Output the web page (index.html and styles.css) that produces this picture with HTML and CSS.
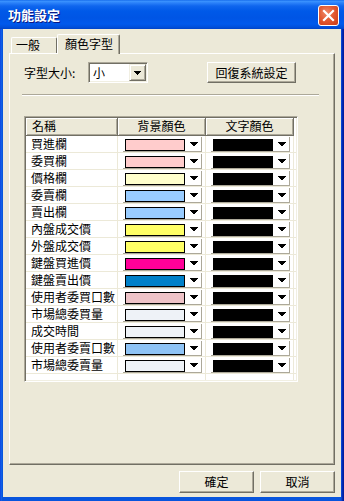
FILE: index.html
```html
<!DOCTYPE html>
<html lang="zh-Hant">
<head>
<meta charset="utf-8">
<title>功能設定</title>
<link rel="stylesheet" href="styles.css">
</head>
<body>
<div class="window">
  <div class="titlebar">
    <span class="title">功能設定</span>
    <div class="close">
      <svg width="13" height="13" viewBox="0 0 13 13"><path d="M2 2L11 11M11 2L2 11" stroke="#fff" stroke-width="2.2" stroke-linecap="square"/></svg>
    </div>
  </div>
  <div class="client">
    <div class="tabs">
      <div class="tab">一般</div>
      <div class="tab active">顏色字型</div>
    </div>
    <div class="panel">
      <div class="toprow">
        <span class="label">字型大小:</span>
        <div class="combo">
          <span class="combo-text">小</span>
          <div class="dropbtn"><svg class="tri" width="7" height="4" viewBox="0 0 7 4"><path d="M0 0h7v1h-1v1h-1v1h-1v1h-1v-1h-1v-1h-1v-1h-1z"/></svg></div>
        </div>
        <div class="btn reset">回復系統設定</div>
      </div>
      <div class="sep"></div>
      <div class="grid">
        <div class="hrow">
          <div class="hcell c1 left">名稱</div>
          <div class="hcell c2">背景顏色</div>
          <div class="hcell c3">文字顏色</div>
          <div class="hfill"></div>
        </div>
        <div class="row"><div class="cell c1">買進欄</div><div class="cell c2"><div class="cbox"><span class="sw" style="background:#FFCCCC"></span><svg class="tri" width="8" height="4" viewBox="0 0 8 4"><path d="M0 0h8v1h-1v1h-1v1h-1v1h-2v-1h-1v-1h-1v-1h-1z"/></svg></div></div><div class="cell c3"><div class="cbox"><span class="sw" style="background:#000"></span><svg class="tri" width="8" height="4" viewBox="0 0 8 4"><path d="M0 0h8v1h-1v1h-1v1h-1v1h-2v-1h-1v-1h-1v-1h-1z"/></svg></div></div><div class="cell fill"></div></div>
        <div class="row"><div class="cell c1">委買欄</div><div class="cell c2"><div class="cbox"><span class="sw" style="background:#FFCCCC"></span><svg class="tri" width="8" height="4" viewBox="0 0 8 4"><path d="M0 0h8v1h-1v1h-1v1h-1v1h-2v-1h-1v-1h-1v-1h-1z"/></svg></div></div><div class="cell c3"><div class="cbox"><span class="sw" style="background:#000"></span><svg class="tri" width="8" height="4" viewBox="0 0 8 4"><path d="M0 0h8v1h-1v1h-1v1h-1v1h-2v-1h-1v-1h-1v-1h-1z"/></svg></div></div><div class="cell fill"></div></div>
        <div class="row"><div class="cell c1">價格欄</div><div class="cell c2"><div class="cbox"><span class="sw" style="background:#FFFFCC"></span><svg class="tri" width="8" height="4" viewBox="0 0 8 4"><path d="M0 0h8v1h-1v1h-1v1h-1v1h-2v-1h-1v-1h-1v-1h-1z"/></svg></div></div><div class="cell c3"><div class="cbox"><span class="sw" style="background:#000"></span><svg class="tri" width="8" height="4" viewBox="0 0 8 4"><path d="M0 0h8v1h-1v1h-1v1h-1v1h-2v-1h-1v-1h-1v-1h-1z"/></svg></div></div><div class="cell fill"></div></div>
        <div class="row"><div class="cell c1">委賣欄</div><div class="cell c2"><div class="cbox"><span class="sw" style="background:#99CCFF"></span><svg class="tri" width="8" height="4" viewBox="0 0 8 4"><path d="M0 0h8v1h-1v1h-1v1h-1v1h-2v-1h-1v-1h-1v-1h-1z"/></svg></div></div><div class="cell c3"><div class="cbox"><span class="sw" style="background:#000"></span><svg class="tri" width="8" height="4" viewBox="0 0 8 4"><path d="M0 0h8v1h-1v1h-1v1h-1v1h-2v-1h-1v-1h-1v-1h-1z"/></svg></div></div><div class="cell fill"></div></div>
        <div class="row"><div class="cell c1">賣出欄</div><div class="cell c2"><div class="cbox"><span class="sw" style="background:#99CCFF"></span><svg class="tri" width="8" height="4" viewBox="0 0 8 4"><path d="M0 0h8v1h-1v1h-1v1h-1v1h-2v-1h-1v-1h-1v-1h-1z"/></svg></div></div><div class="cell c3"><div class="cbox"><span class="sw" style="background:#000"></span><svg class="tri" width="8" height="4" viewBox="0 0 8 4"><path d="M0 0h8v1h-1v1h-1v1h-1v1h-2v-1h-1v-1h-1v-1h-1z"/></svg></div></div><div class="cell fill"></div></div>
        <div class="row"><div class="cell c1">內盤成交價</div><div class="cell c2"><div class="cbox"><span class="sw" style="background:#FFFF66"></span><svg class="tri" width="8" height="4" viewBox="0 0 8 4"><path d="M0 0h8v1h-1v1h-1v1h-1v1h-2v-1h-1v-1h-1v-1h-1z"/></svg></div></div><div class="cell c3"><div class="cbox"><span class="sw" style="background:#000"></span><svg class="tri" width="8" height="4" viewBox="0 0 8 4"><path d="M0 0h8v1h-1v1h-1v1h-1v1h-2v-1h-1v-1h-1v-1h-1z"/></svg></div></div><div class="cell fill"></div></div>
        <div class="row"><div class="cell c1">外盤成交價</div><div class="cell c2"><div class="cbox"><span class="sw" style="background:#FFFF66"></span><svg class="tri" width="8" height="4" viewBox="0 0 8 4"><path d="M0 0h8v1h-1v1h-1v1h-1v1h-2v-1h-1v-1h-1v-1h-1z"/></svg></div></div><div class="cell c3"><div class="cbox"><span class="sw" style="background:#000"></span><svg class="tri" width="8" height="4" viewBox="0 0 8 4"><path d="M0 0h8v1h-1v1h-1v1h-1v1h-2v-1h-1v-1h-1v-1h-1z"/></svg></div></div><div class="cell fill"></div></div>
        <div class="row"><div class="cell c1">鍵盤買進價</div><div class="cell c2"><div class="cbox"><span class="sw" style="background:#FF0099"></span><svg class="tri" width="8" height="4" viewBox="0 0 8 4"><path d="M0 0h8v1h-1v1h-1v1h-1v1h-2v-1h-1v-1h-1v-1h-1z"/></svg></div></div><div class="cell c3"><div class="cbox"><span class="sw" style="background:#000"></span><svg class="tri" width="8" height="4" viewBox="0 0 8 4"><path d="M0 0h8v1h-1v1h-1v1h-1v1h-2v-1h-1v-1h-1v-1h-1z"/></svg></div></div><div class="cell fill"></div></div>
        <div class="row"><div class="cell c1">鍵盤賣出價</div><div class="cell c2"><div class="cbox"><span class="sw" style="background:#0080C8"></span><svg class="tri" width="8" height="4" viewBox="0 0 8 4"><path d="M0 0h8v1h-1v1h-1v1h-1v1h-2v-1h-1v-1h-1v-1h-1z"/></svg></div></div><div class="cell c3"><div class="cbox"><span class="sw" style="background:#000"></span><svg class="tri" width="8" height="4" viewBox="0 0 8 4"><path d="M0 0h8v1h-1v1h-1v1h-1v1h-2v-1h-1v-1h-1v-1h-1z"/></svg></div></div><div class="cell fill"></div></div>
        <div class="row"><div class="cell c1">使用者委買口數</div><div class="cell c2"><div class="cbox"><span class="sw" style="background:#EEC3C8"></span><svg class="tri" width="8" height="4" viewBox="0 0 8 4"><path d="M0 0h8v1h-1v1h-1v1h-1v1h-2v-1h-1v-1h-1v-1h-1z"/></svg></div></div><div class="cell c3"><div class="cbox"><span class="sw" style="background:#000"></span><svg class="tri" width="8" height="4" viewBox="0 0 8 4"><path d="M0 0h8v1h-1v1h-1v1h-1v1h-2v-1h-1v-1h-1v-1h-1z"/></svg></div></div><div class="cell fill"></div></div>
        <div class="row"><div class="cell c1">市場總委買量</div><div class="cell c2"><div class="cbox"><span class="sw" style="background:#EEF2F7"></span><svg class="tri" width="8" height="4" viewBox="0 0 8 4"><path d="M0 0h8v1h-1v1h-1v1h-1v1h-2v-1h-1v-1h-1v-1h-1z"/></svg></div></div><div class="cell c3"><div class="cbox"><span class="sw" style="background:#000"></span><svg class="tri" width="8" height="4" viewBox="0 0 8 4"><path d="M0 0h8v1h-1v1h-1v1h-1v1h-2v-1h-1v-1h-1v-1h-1z"/></svg></div></div><div class="cell fill"></div></div>
        <div class="row"><div class="cell c1">成交時間</div><div class="cell c2"><div class="cbox"><span class="sw" style="background:#EEF2F7"></span><svg class="tri" width="8" height="4" viewBox="0 0 8 4"><path d="M0 0h8v1h-1v1h-1v1h-1v1h-2v-1h-1v-1h-1v-1h-1z"/></svg></div></div><div class="cell c3"><div class="cbox"><span class="sw" style="background:#000"></span><svg class="tri" width="8" height="4" viewBox="0 0 8 4"><path d="M0 0h8v1h-1v1h-1v1h-1v1h-2v-1h-1v-1h-1v-1h-1z"/></svg></div></div><div class="cell fill"></div></div>
        <div class="row"><div class="cell c1">使用者委賣口數</div><div class="cell c2"><div class="cbox"><span class="sw" style="background:#8EC3F5"></span><svg class="tri" width="8" height="4" viewBox="0 0 8 4"><path d="M0 0h8v1h-1v1h-1v1h-1v1h-2v-1h-1v-1h-1v-1h-1z"/></svg></div></div><div class="cell c3"><div class="cbox"><span class="sw" style="background:#000"></span><svg class="tri" width="8" height="4" viewBox="0 0 8 4"><path d="M0 0h8v1h-1v1h-1v1h-1v1h-2v-1h-1v-1h-1v-1h-1z"/></svg></div></div><div class="cell fill"></div></div>
        <div class="row"><div class="cell c1">市場總委賣量</div><div class="cell c2"><div class="cbox"><span class="sw" style="background:#EEF2F7"></span><svg class="tri" width="8" height="4" viewBox="0 0 8 4"><path d="M0 0h8v1h-1v1h-1v1h-1v1h-2v-1h-1v-1h-1v-1h-1z"/></svg></div></div><div class="cell c3"><div class="cbox"><span class="sw" style="background:#000"></span><svg class="tri" width="8" height="4" viewBox="0 0 8 4"><path d="M0 0h8v1h-1v1h-1v1h-1v1h-2v-1h-1v-1h-1v-1h-1z"/></svg></div></div><div class="cell fill"></div></div>
        <div class="row last"><div class="cell c1"></div><div class="cell c2"></div><div class="cell c3"></div><div class="cell fill"></div></div>
      </div>
    </div>
    <div class="buttons">
      <div class="btn dlg">確定</div>
      <div class="btn dlg">取消</div>
    </div>
  </div>
</div>
</body>
</html>
```

FILE: styles.css
```css
* { box-sizing: border-box; }

html, body {
  margin: 0;
  padding: 0;
  background: #fff;
}

body {
  font-family: "Noto Sans CJK TC", "Noto Sans CJK SC", sans-serif;
  font-size: 12px;
  color: #000;
}

.window {
  width: 344px;
  height: 501px;
  display: flex;
  flex-direction: column;
  background: linear-gradient(to right, #0831D9 0, #166AEE 1px, #0855DD 2px, #0855DD 341px, #0636C8 342px, #001EA0 343px);
}

.titlebar {
  height: 29px;
  flex: none;
  display: flex;
  align-items: flex-start;
  padding: 0 5px 0 8px;
  background: linear-gradient(to bottom, #0A5FE6 0, #3D95FF 1px, #2A80F9 3px, #0F66EE 6px, #0059E8 11px, #0055E5 18px, #0059EC 24px, #0050DC 27px, #0043C8 29px);
}

.title {
  flex: 1;
  color: #fff;
  font-weight: bold;
  font-size: 13px;
  line-height: 16px;
  margin-top: 7px;
  text-shadow: 1px 1px #0A1883;
}

.close {
  width: 21px;
  height: 21px;
  margin-top: 5px;
  border: 1px solid #fff;
  border-radius: 3px;
  background: radial-gradient(circle at 40% 35%, #F08A6A 0, #E25A32 45%, #CC3A15 100%);
  display: flex;
  align-items: center;
  justify-content: center;
}

.client {
  flex: 1;
  margin: 0 3px 4px;
  background: #ECE9D8;
  padding: 5px 6px 0;
  display: flex;
  flex-direction: column;
}

.tabs {
  display: flex;
  align-items: flex-end;
  height: 19px;
  padding-left: 2px;
  position: relative;
  z-index: 1;
}

.tab {
  height: 16px;
  width: 46px;
  border-top: 1px solid #fff;
  border-left: 1px solid #fff;
  border-right: 1px solid #716F64;
  border-radius: 2px 2px 0 0;
  padding-left: 4px;
  line-height: 14px;
  background: #ECE9D8;
}

.tab.active {
  width: 63px;
  height: 20px;
  margin-bottom: -1px;
  padding-left: 7px;
  line-height: 17px;
  box-shadow: inset -1px 0 #ACA899;
}

.panel {
  width: 326px;
  height: 412px;
  border-top: 1px solid #fff;
  border-left: 1px solid #fff;
  border-right: 1px solid #716F64;
  border-bottom: 1px solid #716F64;
  box-shadow: inset -1px -1px #ACA899;
  padding: 8px 0 0 14px;
}

.toprow {
  display: flex;
  align-items: center;
  height: 21px;
}

.label {
  width: 64px;
  line-height: 16px;
}

.combo {
  width: 60px;
  height: 21px;
  border: 1px solid;
  border-color: #ACA899 #fff #fff #ACA899;
  box-shadow: inset 1px 1px #716F64, inset -1px -1px #F1EFE2;
  background: #fff;
  display: flex;
  align-items: center;
  padding: 1px;
}

.combo-text {
  padding-left: 3px;
  line-height: 16px;
  flex: 1;
}

.dropbtn {
  width: 17px;
  height: 17px;
  background: #ECE9D8;
  border: 1px solid;
  border-color: #F1EFE2 #716F64 #716F64 #F1EFE2;
  box-shadow: inset 1px 1px #fff, inset -1px -1px #ACA899;
  display: flex;
  align-items: center;
  justify-content: center;
}

.tri {
  display: block;
  fill: #000;
}

.btn {
  background: #ECE9D8;
  border: 1px solid;
  border-color: #fff #716F64 #716F64 #fff;
  box-shadow: inset -1px -1px #ACA899;
  display: flex;
  align-items: center;
  justify-content: center;
  line-height: 16px;
}

.reset {
  width: 89px;
  height: 21px;
  margin-left: 59px;
}

.sep {
  width: 297px;
  height: 2px;
  margin: 11px 0 0 -2px;
  border-top: 1px solid #ACA899;
  border-bottom: 1px solid #fff;
}

.grid {
  width: 274px;
  height: 266px;
  margin-top: 20px;
  border: 1px solid;
  border-color: #ACA899 #fff #fff #ACA899;
  box-shadow: inset 1px 1px #716F64, inset -1px -1px #F1EFE2;
  padding: 1px;
  background: #fff;
  display: flex;
  flex-direction: column;
}

.hrow {
  display: flex;
  height: 18px;
  flex: none;
}

.hcell {
  height: 18px;
  background: #ECE9D8;
  border-right: 1px solid #716F64;
  border-bottom: 1px solid #716F64;
  box-shadow: inset 1px 1px #fff, inset -1px -1px #ACA899;
  text-align: center;
  line-height: 16px;
}

.hcell.left {
  text-align: left;
  padding-left: 6px;
}

.hfill {
  flex: 1;
  background: #fff;
}

.c1 { width: 92px; flex: none; }
.c2 { width: 88px; flex: none; }
.c3 { width: 88px; flex: none; }
.fill { flex: 1; border-right: none !important; }

.row {
  display: flex;
  height: 17px;
  flex: none;
}

.row.last {
  flex: 1;
}

.cell {
  border-right: 1px solid #ECE9D8;
  border-bottom: 1px solid #ECE9D8;
  line-height: 16px;
}

.row.last .cell {
  border-bottom: none;
}

.cell.c1 {
  padding-left: 5px;
  white-space: nowrap;
}

.cell.c2, .cell.c3 {
  padding: 1px 0 0 5px;
}

.cbox {
  width: 79px;
  height: 15px;
  border-right: 1px solid #ACA899;
  border-bottom: 1px solid #ACA899;
  background: #fff;
  display: flex;
  align-items: flex-start;
  padding: 2px 0 0 2px;
}

.sw {
  width: 60px;
  height: 12px;
  border: 1px solid #000;
  flex: none;
}

.cbox .tri {
  margin: 3px 0 0 5px;
}

.buttons {
  display: flex;
  justify-content: flex-end;
  gap: 6px;
  margin-top: 6px;
}

.dlg {
  width: 75px;
  height: 22px;
}
```
